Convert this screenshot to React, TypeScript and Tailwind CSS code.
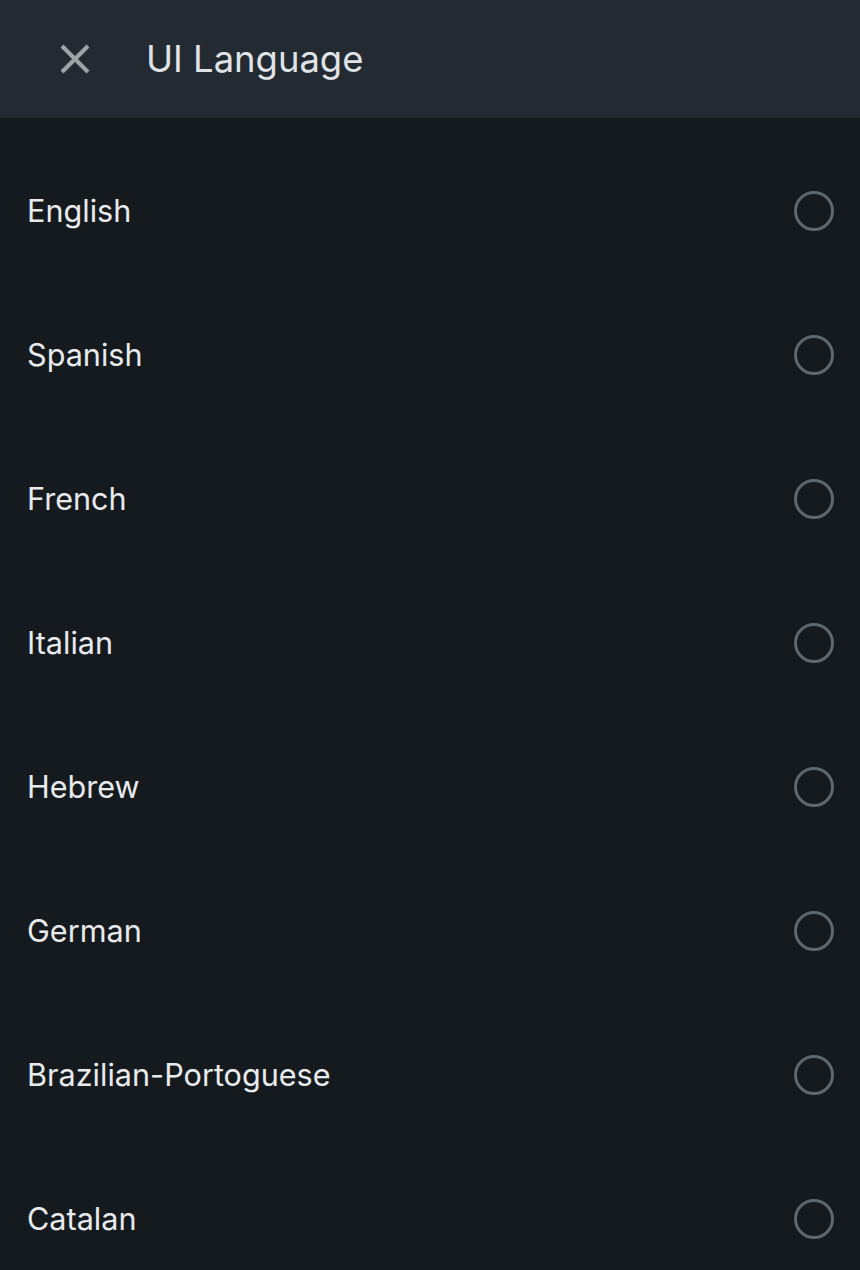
import React from "react";

const langs = ["English", "Spanish", "French", "Italian", "Hebrew", "German", "Brazilian-Portoguese", "Catalan"];

export default function App() {
  return (
    <div className="w-[860px] h-[1270px] overflow-hidden bg-[#151a1f]" style={{ fontFamily: "Inter, 'Noto Sans', sans-serif" }}>
      <div className="h-[118px] bg-[#232a31] flex items-center">
        <div className="w-[146px] flex justify-center">
          <svg width="30" height="30" viewBox="0 0 30 30" style={{ marginLeft: 4 }}>
            <path d="M2 2 L28 28 M28 2 L2 28" stroke="#9ea3a8" strokeWidth="4.2" strokeLinecap="butt" />
          </svg>
        </div>
        <div className="text-[36.4px] text-[#dfe3e7] leading-none mt-[1px]">UI Language</div>
      </div>
      <div className="pt-[21px]">
        {langs.map((l) => (
          <div key={l} className="h-[144px] flex items-center justify-between pl-[27px] pr-[26px]">
            <span className="text-[30.6px] text-[#e8eaec] leading-none">{l}</span>
            <div className="w-[40px] h-[40px] rounded-full border-[3px] border-[#5d676f]" />
          </div>
        ))}
      </div>
    </div>
  );
}
